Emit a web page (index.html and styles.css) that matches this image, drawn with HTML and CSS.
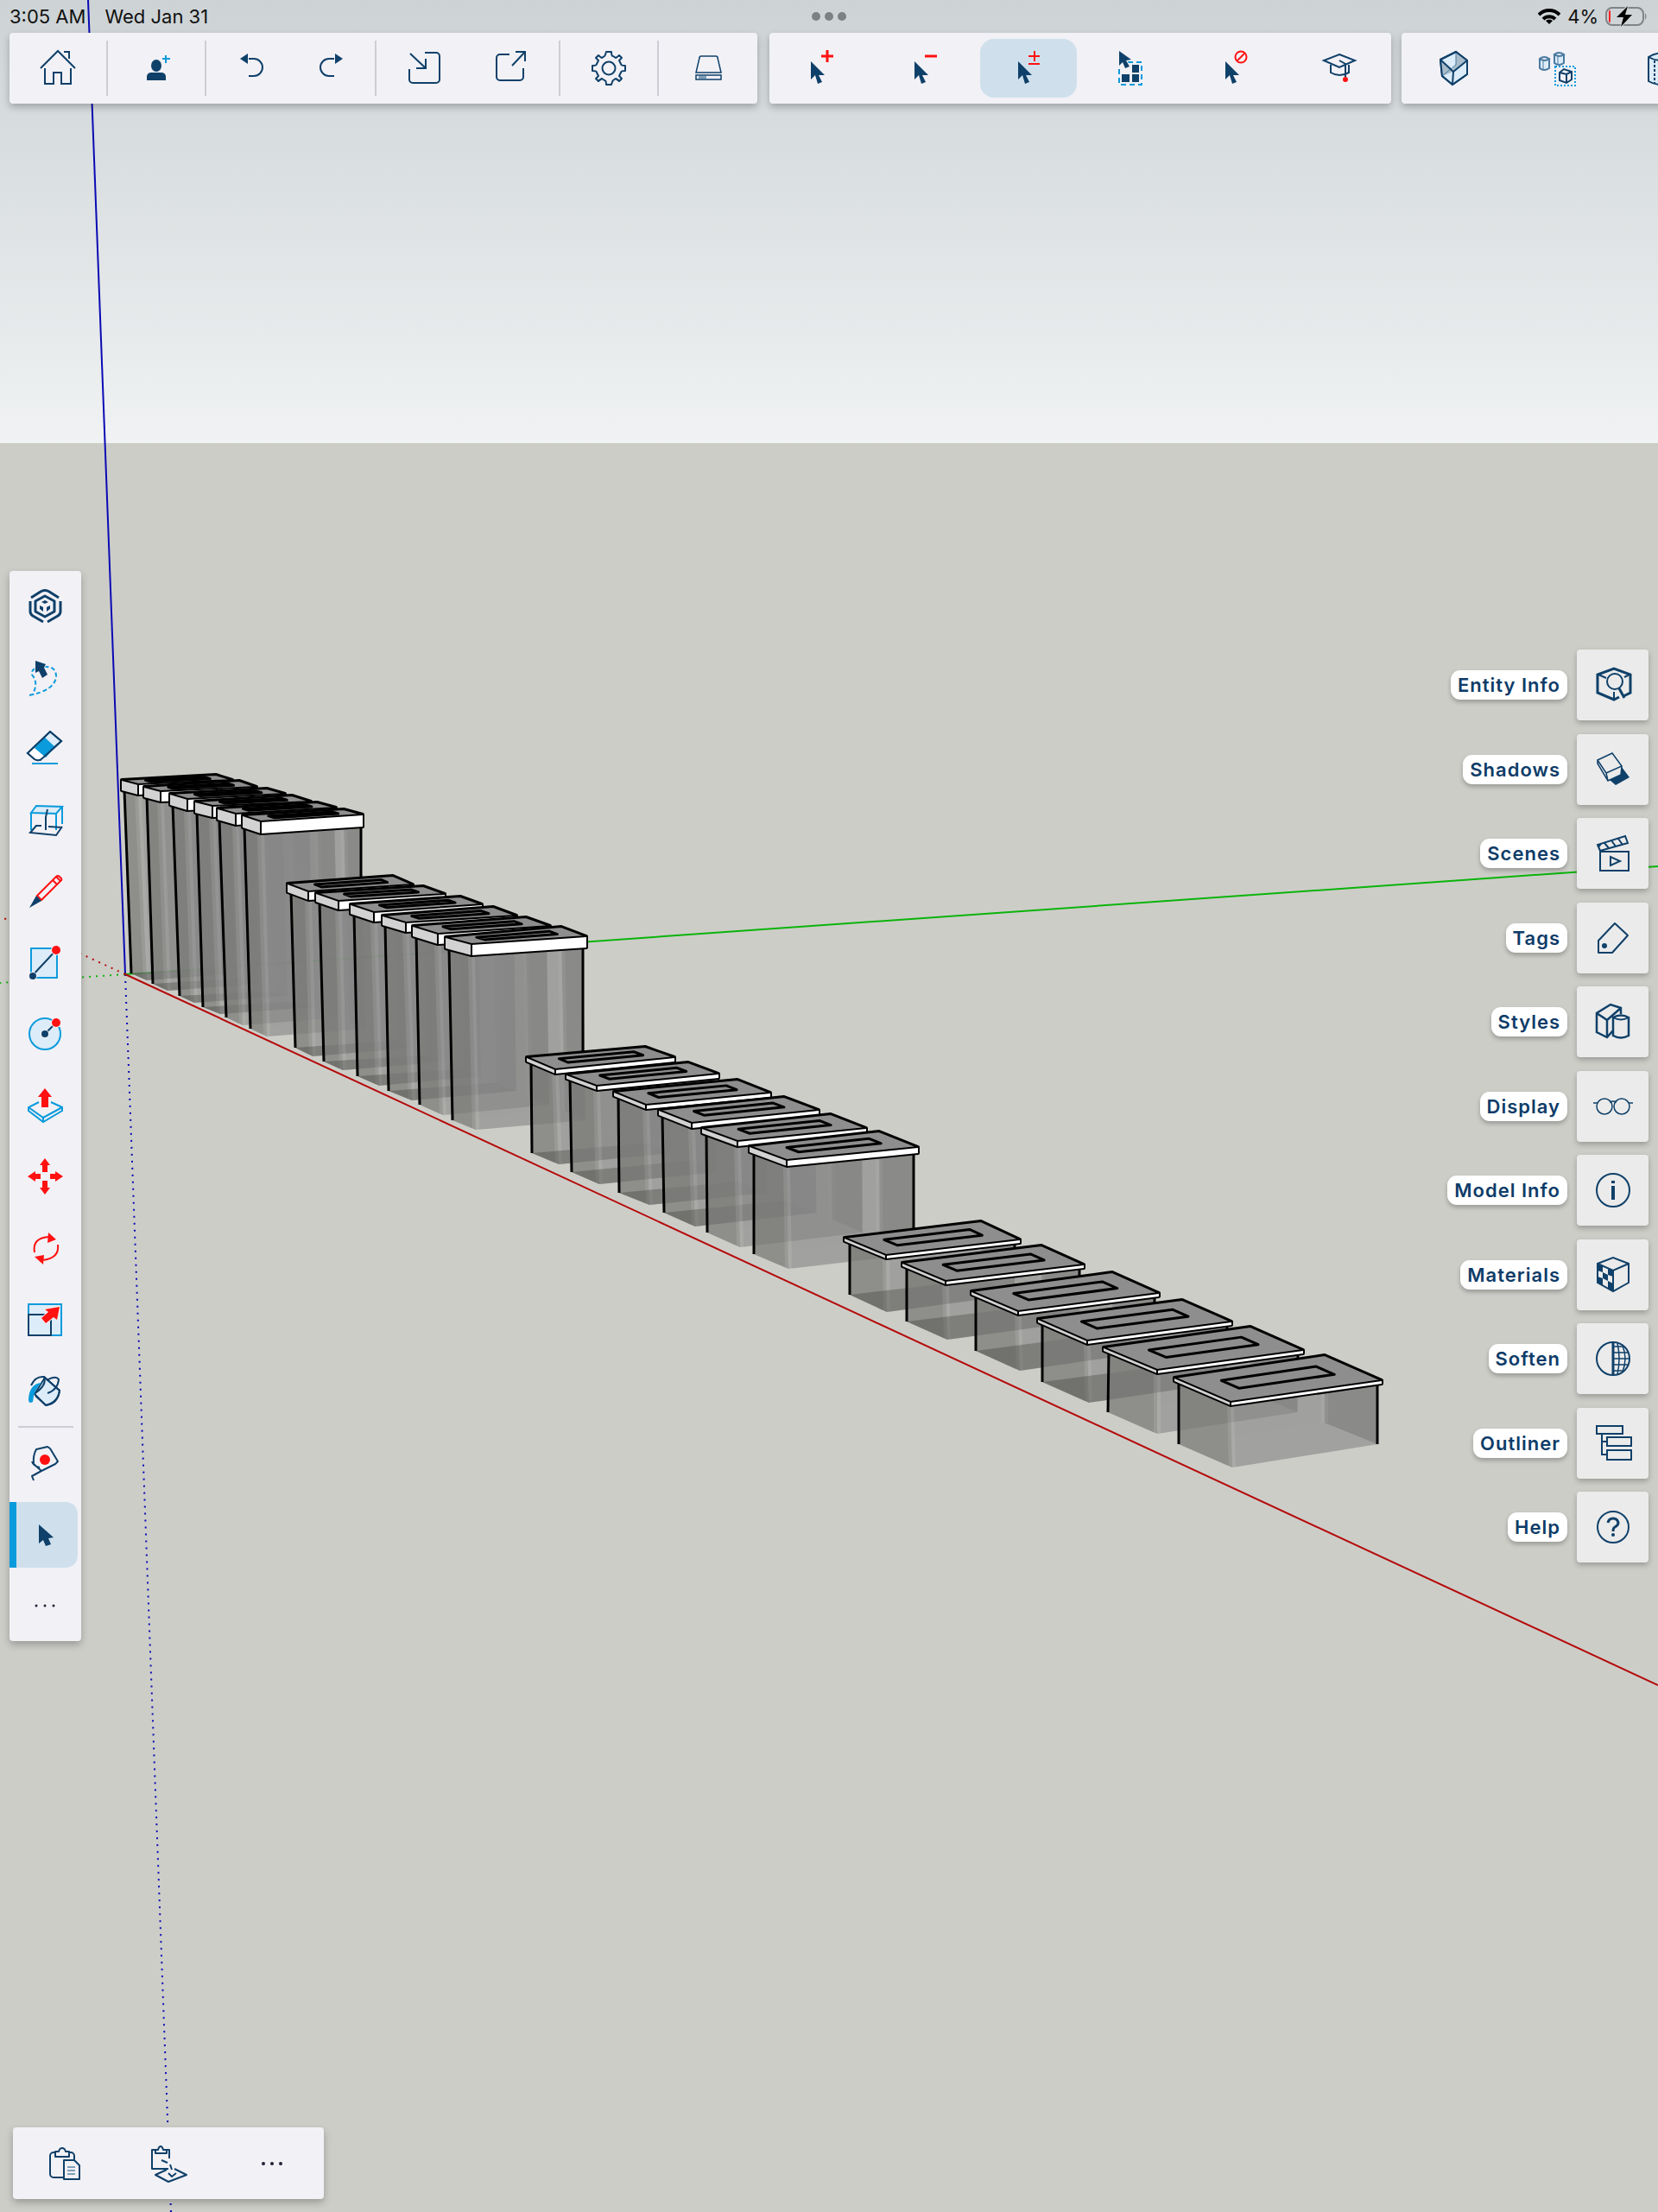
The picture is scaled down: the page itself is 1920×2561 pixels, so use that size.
FILE: index.html
```html
<!DOCTYPE html>
<html lang="en">
<head>
<meta charset="utf-8">
<meta name="viewport" content="width=device-width, initial-scale=1">
<title>Model viewer</title>
<link rel="stylesheet" href="styles.css">
</head>
<body>
<svg class="scene" viewBox="0 0 1920 2561" preserveAspectRatio="xMinYMin slice" aria-hidden="true">
  <defs>
    <linearGradient id="sky" x1="0" y1="0" x2="0" y2="1">
      <stop offset="0" stop-color="#cdd3d5"/>
      <stop offset="1" stop-color="#f0f2f3"/>
    </linearGradient>
  </defs>
  <rect width="1920" height="2561" fill="#cdcdc8"/>
  <rect width="1920" height="513" fill="url(#sky)"/>
  <path class="axis blue" d="M102 0L145 1128"/>
  <path class="axis blue dotted" d="M145 1128L198 2561"/>
  <path class="axis green" d="M145 1128L1920 1003"/>
  <path class="axis green dotted" d="M145 1128L0 1138"/>
  <path class="axis red dotted" d="M145 1128L0 1061"/>
  <g id="boxes"></g>
  <path class="axis red" d="M145 1128L1920 1951"/>
</svg>

<div class="app">
  <header>
    <div class="status">
      <div class="status-left"><span>3:05 AM</span><span>Wed Jan 31</span></div>
      <div class="status-dots"><i></i><i></i><i></i></div>
      <div class="status-right">
        <svg width="26" height="20" viewBox="0 0 26 20"><g fill="none" stroke="#000" stroke-width="4"><path d="M1 8a17 17 0 0 1 24 0"/><path d="M6 13a10 10 0 0 1 14 0"/></g><path d="M13 19l-4-4a6 6 0 0 1 8 0z"/></svg>
        <span>4%</span>
        <svg width="50" height="24" viewBox="0 0 50 24"><rect x="1" y="2" width="43" height="20" rx="7" fill="none" stroke="#808486" stroke-width="2"/><rect x="4" y="5" width="2" height="14" rx="1" fill="#f22"/><path d="M46 8q3 4 0 8z" fill="#808486"/><path d="M26 0L13 13h8l-3 11 13-14h-8z" stroke="#d0d5d7" stroke-width="2" paint-order="stroke"/></svg>
      </div>
    </div>
    <div class="toolbars">
      <div class="bar main-bar" role="toolbar" aria-label="Main">
        <div class="cell"><button aria-label="Home"><svg class="icon" viewBox="0 0 48 48"><path d="M4 24L24 4l20 20M31 5h6v8M9 24v18h10V29h9v13h11V24"/></svg></button></div>
        <div class="cell"><button aria-label="Add user"><svg class="icon" viewBox="0 0 48 48"><g class="solid"><ellipse cx="24" cy="21" rx="6" ry="7"/><path d="M13 38v-5q1-4 5-4h12q4 0 5 4v5z"/></g><path class="sky" d="M31 13h9M35 9v9"/></svg></button></div>
        <div class="cell pair"><button aria-label="Undo"><svg class="icon" viewBox="0 0 48 48"><path d="M20 13h6a10 10 0 0 1 0 20h-6"/><path class="solid" d="M10 13l9-6v12z"/></svg></button><button aria-label="Redo"><svg class="icon" viewBox="0 0 48 48"><path d="M29 13h-6a10 10 0 0 0 0 20h6"/><path class="solid" d="M39 13l-9-6v12z"/></svg></button></div>
        <div class="cell pair wide"><button aria-label="Import"><svg class="icon" viewBox="0 0 48 48"><path d="M24 6h13a4 4 0 0 1 4 4v27a4 4 0 0 1-4 4H10a4 4 0 0 1-4-4V25M7 7l18 17M25 13v11H14"/></svg></button><button aria-label="Export"><svg class="icon" viewBox="0 0 48 48"><path d="M22 8H11a4 4 0 0 0-4 4v22a4 4 0 0 0 4 4h23a4 4 0 0 0 4-4V24M25 21L40 5M29 5h11v11"/></svg></button></div>
        <div class="cell"><button aria-label="Settings"><svg class="icon" viewBox="0 0 48 48"><g transform="translate(24 24)"><path stroke-linejoin="round" d="M19 -3V3Q14 3 14 5L12 9Q13 10 15 12L12 15Q10 13 8 12L5 14Q4 15 3 19H-3Q-3 14 -5 14L-8 12Q-10 13 -12 15L-15 12Q-13 10 -12 9L-14 5Q-14 3 -19 3V-3Q-14 -3 -14 -5L-12 -9Q-13 -10 -15 -12L-12 -15Q-10 -13 -8 -12L-5 -14Q-4 -15 -3 -19H3Q3 -14 5 -14L8 -12Q10 -13 12 -15L15 -12Q13 -10 12 -9L14 -5Q14 -3 19 -3Z"/><circle r="7.500"/></g></svg></button></div>
        <div class="cell"><button aria-label="Tray"><svg class="icon" viewBox="0 0 48 48"><path stroke-width="1.500" d="M16 10h17q2 0 2 2l4 17H10l4-17q0-2 2-2zM10 32h29v5H10z"/><path class="light" d="M14 34h7v1h-7z"/></svg></button></div>
      </div>
      <div class="bar select-bar" role="toolbar" aria-label="Selection">
        <button aria-label="Add to selection"><svg class="icon" viewBox="0 0 48 48"><path class="solid" d="M12 16v21l5-5 3 10 5-2-4-8h7z"/><path class="red" stroke-width="3" d="M24 10h14M31 3v14"/></svg></button>
        <button aria-label="Remove from selection"><svg class="icon" viewBox="0 0 48 48"><path class="solid" d="M12 16v21l5-5 3 10 5-2-4-8h7z"/><path class="red" stroke-width="3" d="M24 10h14"/></svg></button>
        <button class="active" aria-label="Toggle selection"><svg class="icon" viewBox="0 0 48 48"><path class="solid" d="M12 16v21l5-5 3 10 5-2-4-8h7z"/><path class="red" d="M24 10h13M31 4v12M24 19h13"/></svg></button>
        <button aria-label="Select all"><svg class="icon" viewBox="0 0 48 48"><rect class="sky" x="9" y="17" width="26" height="26" stroke-dasharray="6 4"/><path class="solid" d="M24 20h8v9h-8zM12 31h9v9h-9zM24 31h8v9h-8z"/><path class="solid halo" d="M9 4v17l4-4 3 7 5-2-4-7 6-1z"/></svg></button>
        <button aria-label="Deselect all"><svg class="icon" viewBox="0 0 48 48"><path class="solid" d="M12 16v21l5-5 3 10 5-2-4-8h7z"/><circle class="red" cx="30" cy="11" r="6.500"/><path class="red" d="M26 15l8-8"/></svg></button>
        <button aria-label="Learn"><svg class="icon" viewBox="0 0 48 48"><path d="M24 8l18 7-18 8-18-8zM14 20v9q10 6 21 0v-9M24 15l7 4v15"/><circle class="redfill" cx="31" cy="37" r="3"/></svg></button>
      </div>
      <div class="bar select-bar" role="toolbar" aria-label="Views">
        <button aria-label="Face style"><svg class="icon" viewBox="0 0 48 48"><path class="pale" d="M9 14L27 5l13 10v16L23 43 11 33z"/><path class="shade" d="M27 5l13 10-16 13-1-4 4-4zM9 14l15 14-13 5z"/><path class="mid" stroke-width="1" d="M27 5v15L11 33"/><path d="M9 14L27 5l13 10v16L23 43 11 33zM9 14l15 14-1 15M24 28l16-13"/></svg></button>
        <button aria-label="Instances"><svg class="icon thin" viewBox="0 0 48 48"><path class="pale mid" stroke-width="2" d="M4 13v11q5 4 11 0V13M4 13q5-4 11 0q-5 4-11 0zM21 8v10q5 4 11 0V8M21 8q5-4 11 0q-5 4-11 0z"/><path class="mid" d="M8 15v10M25 10v10"/><rect class="sky" stroke-width="2" x="22" y="22" width="23" height="22" stroke-dasharray="2 2"/><path stroke-width="2" d="M27 29l5-4 9 3v9l-6 4-8-3zM27 29l8 2 6-3M35 31v10"/></svg></button>
        <button aria-label="Cylinder"><svg class="icon" viewBox="0 0 48 48"><path class="pale" d="M10 11v28q14 8 28 0V11q-14-9-28 0zq14 8 28 0"/><path stroke-dasharray="3 2" d="M17 15v27"/></svg></button>
      </div>
    </div>
  </header>

  <main>
    <div class="bar tools" role="toolbar" aria-label="Tools" aria-orientation="vertical">
      <button aria-label="SketchUp"><svg class="icon" viewBox="0 0 48 48"><path stroke-width="3" d="M8 14l11-7q5-3 10 0l11 7M7 18v12q0 3 3 5l12 7M42 18v12q0 3-3 5l-12 7"/><path stroke-width="3" stroke-linejoin="round" d="M24 12l11 6v12l-11 6-11-6V18z"/><path class="solid" d="M24 17l4 2-4 2-4-2zM18 23l4 2v5l-4-3zM30 23l-4 2v5l4-3z"/></svg></button>
      <button aria-label="Lasso"><svg class="icon" viewBox="0 0 48 48"><path class="sky" stroke-dasharray="5 3" d="M6 44q30-6 31-22 0-12-14-11Q7 12 9 20q8 10 1 22"/><path class="solid halo" d="M13 4l12 4-2 4 4 8-6 4-4-8-4 2z"/></svg></button>
      <button aria-label="Eraser"><svg class="icon" viewBox="0 0 48 48"><path class="pale" d="M30 4l13 11-22 20q-4 4-9 1l-8-7z"/><path fill="#fff" stroke="none" d="M12 23l13 11-4 3-7 0-10-8z"/><path class="blue-fill" d="M23 10l13 12-11 12-13-11z"/><path d="M30 4l13 11-22 20q-4 4-9 1l-8-7z"/><path class="sky" d="M9 41h30"/></svg></button>
      <button aria-label="Section"><svg class="icon" viewBox="0 0 48 48"><path class="sky pale-in" d="M8 15l6-8 30 1-7 8z"/><path class="sky" d="M8 15v20M37 16v19M44 8v20"/><path d="M14 30l-7 8 30 3 7-10M13 30h7M28 31l16 1M25 35V20l2-9"/></svg></button>
      <button aria-label="Line"><svg class="icon" viewBox="0 0 48 48"><path class="red" d="M15 29L37 7q2-2 4 0l2 2q1 2-1 3L20 34zM33 11l5 5M37 7l5 5"/><path class="solid" d="M6 43l8-14 6 6z"/></svg></button>
      <button aria-label="Rectangle"><svg class="icon" viewBox="0 0 48 48"><rect class="sky pale-in" x="8" y="7" width="30" height="34"/><path d="M9 39L37 9"/><circle class="solid halo" cx="10" cy="39" r="4"/><circle class="redfill halo" cx="37" cy="9" r="5"/></svg></button>
      <button aria-label="Circle"><svg class="icon" viewBox="0 0 48 48"><circle class="sky pale-in" cx="24" cy="24" r="18"/><path d="M24 24l13-13"/><circle class="solid halo" cx="24" cy="24" r="4"/><circle class="redfill halo" cx="37" cy="11" r="5"/></svg></button>
      <button aria-label="Push pull"><svg class="icon" viewBox="0 0 48 48"><path class="sky" d="M17 20L5 26v4l17 13 22-13v-4l-13-6M5 26l17 12 22-12M22 38v5"/><path class="redfill halo" d="M24 4l8 10h-4v12h-8V14h-4z"/></svg></button>
      <button aria-label="Move"><svg class="icon" viewBox="0 0 48 48"><path class="redfill" d="M24 3l6 8h-3v8h-6v-8h-3zM24 45l6-8h-3v-8h-6v8h-3zM4 24l9-6v3h6v6h-6v3zM45 24l-9-6v3h-6v6h6v3z"/></svg></button>
      <button aria-label="Rotate"><svg class="icon" viewBox="0 0 48 48"><path class="red" d="M12 29Q9 12 29 11M39 20q2 16-18 18"/><path class="redfill" d="M28 6l9 8-10 4zM22 43l-10-9 11-2z"/></svg></button>
      <button aria-label="Scale"><svg class="icon" viewBox="0 0 48 48"><rect class="sky pale-in" x="5" y="7" width="38" height="36"/><path d="M5 43V19h26v24z"/><path class="redfill halo" d="M41 10l-3 15-4-3-9 7-5-6 8-7-4-3z"/></svg></button>
      <button aria-label="Paint"><svg class="icon" viewBox="0 0 48 48"><path class="pale" d="M24 9l17 15q-2 14-16 17L12 28z"/><path d="M8 18Q13 7 23 8l18 16q-2 15-16 17L13 30M23 8q4 10-12 20M26 12q11-6 14-1-1 12-13 16"/><path class="blue-fill" d="M20 15Q6 16 5 34q0 6 5 3 1-14 10-22z"/></svg></button>
      <hr>
      <button aria-label="Tape measure"><svg class="icon" viewBox="0 0 48 48"><path stroke-linejoin="round" d="M14 8l13-3 3 2 9 15-3 3-16 8-9-8q-1-10 3-17zM9 22q2 6 9 7M20 33L9 39l2 5"/><circle class="redfill" cx="24" cy="20" r="6"/></svg></button>
      <button class="active" aria-label="Select"><svg class="icon" viewBox="0 0 48 48"><path class="solid" d="M16 12v22l5-4 3 7 6-2-3-7 6-1z"/></svg></button>
      <button aria-label="More tools"><svg class="icon" viewBox="0 0 48 48"><g fill="#223" stroke="none"><circle cx="14" cy="24" r="1.500"/><circle cx="24" cy="24" r="1.500"/><circle cx="34" cy="24" r="1.500"/></g></svg></button>
    </div>

    <ul class="panels">
      <li><label for="p1">Entity Info</label><button id="p1"><svg class="icon" viewBox="0 0 48 48"><path stroke-width="3" d="M36 37l8-4V12L25 5 6 12v21l19 8 6-3"/><path d="M7 12l9 4M43 12l-6 3M25 32v9"/><circle cx="26" cy="20" r="9"/><path stroke-width="3" d="M31 28l6 11"/></svg></button></li>
      <li><label for="p2">Shadows</label><button id="p2"><svg class="icon" viewBox="0 0 48 48"><path class="solid" d="M34 21l9 12-16 9-7-6 13-6z"/><path stroke-width="1.500" d="M6 13l17-8 11 15-18 8zM6 13v4l12 20 15-7 1-10M16 28l2 9"/></svg></button></li>
      <li><label for="p3">Scenes</label><button id="p3"><svg class="icon" viewBox="0 0 48 48"><path d="M9 22h33v22H9zM9 21l-3-7L38 4l3 8zM21 28v10l11-5zM14 12l5 6M22 9l5 7M30 7l5 7M10 13l-3 4"/></svg></button></li>
      <li><label for="p4">Tags</label><button id="p4"><svg class="icon" viewBox="0 0 48 48"><path stroke-linejoin="round" d="M7 27L26 7l15 14-18 20H7z"/><circle class="solid" cx="14" cy="33" r="3"/></svg></button></li>
      <li><label for="p5">Styles</label><button id="p5"><svg class="icon" viewBox="0 0 48 48"><path stroke-width="2.500" d="M24 34l-7 8-12-6V14L21 4l12 4v7M5 14l12 8v20M17 22L33 8M24 19v21q9 5 18 0V19q-9-5-18 0z"/><path d="M24 19q9 5 18 0"/></svg></button></li>
      <li><label for="p6">Display</label><button id="p6"><svg class="icon" viewBox="0 0 48 48"><g stroke-width="1.500"><circle cx="14" cy="24" r="9"/><circle cx="34" cy="24" r="9"/><path d="M20 19q4-2 8 0M1 20h5M42 20h5"/></g></svg></button></li>
      <li><label for="p7">Model Info</label><button id="p7"><svg class="icon" viewBox="0 0 48 48"><circle cx="24" cy="24" r="19"/><path class="solid" d="M22 13h4v3h-4zM22 19h4v16h-4z"/></svg></button></li>
      <li><label for="p8">Materials</label><button id="p8"><svg class="icon" viewBox="0 0 48 48"><path d="M6 11l18-7 18 7v22L24 43 6 33zM6 11l18 8 18-8M24 19v24"/><path class="solid" d="M6 11l6 3v7l-6-2zM18 17l6 2v7l-6-2zM12 21l6 3v7l-6-3zM6 26l6 2v8l-6-3zM18 31l6 3v9l-6-4z"/></svg></button></li>
      <li><label for="p9">Soften</label><button id="p9"><svg class="icon" viewBox="0 0 48 48"><circle cx="24" cy="24" r="19"/><path stroke-width="3" d="M24 5v38"/><path stroke-width="1.500" d="M24 10h12M24 17h17M24 24h19M24 31h17M24 38h12M29 6q4 18 0 36M35 9q6 15 0 30"/></svg></button></li>
      <li><label for="p10">Outliner</label><button id="p10"><svg class="icon" viewBox="0 0 48 48"><path d="M5 4h30v9H5zM17 17h28v10H17zM17 32h28v11H17zM11 13v24h6M11 22h6"/></svg></button></li>
      <li><label for="p11">Help</label><button id="p11"><svg class="icon" viewBox="0 0 48 48"><circle cx="24" cy="24" r="18"/><path stroke-width="3" d="M18 19q1-5 6-5t6 5q0 3-4 5-2 1-2 5"/><circle class="solid" cx="24" cy="33" r="2"/></svg></button></li>
    </ul>
  </main>

  <footer>
    <div class="bar clip-bar" role="toolbar" aria-label="Clipboard">
      <button aria-label="Paste"><svg class="icon" viewBox="0 0 48 48"><path stroke-linejoin="round" d="M22 40H11a4 4 0 0 1-4-4V15a4 4 0 0 1 4-4h2M29 11h2a4 4 0 0 1 4 4v5M13 10h4q1-4 4-4t4 4h4v6H13zM23 20h12l6 6v16H23z"/><path class="light" d="M27 28h9M27 32h9M27 36h9"/></svg></button>
      <button aria-label="Paste in place"><svg class="icon" viewBox="0 0 48 48"><path stroke-linejoin="round" d="M24 30H5V8h4M21 8h4v10M9 8h3q1-4 3-4t3 4h4v4H9zM22 31L9 37l15 8 21-8-14-7M16 20l7 3M26 25l2 6M24 35l4 4 5-4"/></svg></button>
      <button aria-label="More"><svg class="icon" viewBox="0 0 48 48"><g fill="#223" stroke="none"><circle cx="14" cy="24" r="2"/><circle cx="24" cy="24" r="2"/><circle cx="34" cy="24" r="2"/></g></svg></button>
    </div>
  </footer>
</div>
<script src="scene.js"></script>
</body>
</html>
```
FILE: styles.css
```css
* { box-sizing: border-box; }
body {
  margin: 0;
  background: #cdcdc8;
  font-family: Inter, "Liberation Sans", sans-serif;
  font-size: 22px;
  color: #111;
}
.scene { position: absolute; inset: 0; width: 100%; height: 100%; display: block; }
.app {
  position: relative;
  min-height: 100vh;
  display: flex;
  flex-direction: column;
  overflow: hidden;
}
button {
  border: 0;
  padding: 0;
  background: none;
  display: flex;
  align-items: center;
  justify-content: center;
}

/* model */
.axis { fill: none; stroke-width: 2; }
.axis.blue { stroke: #0a0ab4; }
.axis.green { stroke: #0ab40a; }
.axis.red { stroke: #b40a0a; }
.axis.dotted { stroke-dasharray: 2 6; }
.floor { fill: rgba(100, 100, 100, .35); }
.floor-shade { fill: rgba(60, 60, 58, .35); }
.wall-right { fill: rgba(80, 80, 78, .6); }
.wall-back { fill: rgba(110, 110, 110, .4); }
.wall-left { fill: rgba(125, 125, 122, .6); }
.wall-front { fill: rgba(150, 150, 150, .4); }
.glint { stroke: rgba(255, 255, 255, .1); stroke-width: 8; }
.edge { stroke: #000; stroke-width: 3; }
.lid-outline { fill: #000; stroke: #000; stroke-width: 4; stroke-linejoin: round; }
.lid-top { fill: #8e8e8e; stroke: #000; stroke-width: 2; stroke-linejoin: round; }
.lid-left { fill: #d2d2d2; }
.lid-front { fill: #fff; }
.lid-corner { stroke: #000; stroke-width: 2; }
.handle { fill: none; stroke: #000; stroke-width: 3; stroke-linejoin: round; }

/* status line */
.status {
  height: 38px;
  padding: 0 11px;
  display: grid;
  grid-template-columns: 1fr auto 1fr;
  align-items: center;
}
.status-left { display: flex; gap: 22px; }
.status-dots { display: flex; gap: 5px; }
.status-dots i { width: 10px; height: 10px; border-radius: 50%; background: #7c8183; }
.status-right { display: flex; gap: 8px; align-items: center; justify-content: flex-end; }

/* bars */
.bar {
  background: #f2f1f6;
  border-radius: 4px;
  box-shadow: 0 4px 8px rgba(0, 0, 0, .25);
}
.toolbars { display: flex; padding-left: 11px; gap: 12px; }
.main-bar { display: flex; align-items: center; height: 82px; flex: none; margin-right: 2px; }
.cell {
  width: 114px;
  height: 64px;
  display: flex;
  justify-content: center;
  border-right: 2px solid #cdcdd3;
}
.cell:last-child { border-right: 0; }
.cell button { width: 90px; }
.cell.pair { width: 197px; }
.cell.wide { width: 213px; }
.cell.wide button { width: 100px; }
.select-bar { display: flex; align-items: center; height: 82px; flex: none; padding: 0 4px; gap: 8px; }
.select-bar button { width: 112px; height: 68px; border-radius: 16px; }
.select-bar .active { background: #cfe0ec; }

main {
  flex: 1;
  display: flex;
  align-items: center;
  justify-content: space-between;
  padding: 0 11px 22px;
}
.tools {
  width: 83px;
  min-height: 1239px;
  display: flex;
  flex-direction: column;
}
.tools button { flex: 1 0 82px; width: 100%; padding-right: 2px; }
.tools .active {
  flex: 0 0 76px;
  width: 79px;
  margin: 3px 0;
  padding-right: 4px;
  border-left: 8px solid #0a9bdc;
  border-radius: 0 14px 14px 0;
  background: #cfe0ec;
}
.tools hr { width: 64px; height: 2px; margin: 0 auto; border: 0; background: #cdcdd3; }

.panels {
  list-style: none;
  margin: 0;
  padding: 0;
  min-height: 1057px;
  display: flex;
  flex-direction: column;
  justify-content: space-between;
}
.panels li { display: flex; align-items: center; justify-content: flex-end; gap: 11px; }
.panels label {
  padding: 0 8px;
  line-height: 34px;
  border-radius: 11px;
  background: #fff;
  box-shadow: 0 3px 5px rgba(0, 0, 0, .25);
  color: #0e3c68;
  font-weight: 600;
  letter-spacing: 1px;
}
.panels button {
  width: 83px;
  height: 82px;
  background: #ebebeb;
  border-radius: 4px;
  box-shadow: 0 3px 6px rgba(0, 0, 0, .25);
}

footer { display: flex; padding: 0 15px 15px; }
.clip-bar { display: flex; height: 83px; }
.clip-bar button { width: 120px; }

/* icons */
.icon { width: 48px; height: 48px; flex: none; fill: none; stroke: #0f4069; stroke-width: 2; }
.icon.thin { stroke-width: 1; }
.icon .solid { fill: #0f4069; stroke: none; }
.icon .halo { stroke: #f2f1f6; stroke-width: 2; paint-order: stroke; }
.icon .sky { stroke: #0a9bdc; }
.icon .red { stroke: #f11; }
.icon .redfill { fill: #f11; }
.icon .redfill:not(.halo) { stroke: none; }
.icon .pale, .icon .pale-in { fill: #dcecf8; }
.icon .mid { stroke: #4a7aa0; }
.icon .shade { fill: #a8bccb; stroke: none; }
.icon .light { stroke: #7f9fb8; }
.icon .blue-fill { fill: #0a9bdc; stroke: none; }
```
FILE: scene.js
```js
// Storage boxes, far to near. Each row: lid corners (left, front, right, back),
// lid thickness, left edge top and foot, and the foot of the front corner.
const boxes = [
  [141,903, 160,908, 269,903, 250,897, 12, 144,152,1127, 170,1135],
  [167,911, 186,916, 297,911, 277,904, 12, 170,177,1139, 194,1147],
  [197,919, 217,925, 330,919, 309,913, 13, 200,208,1153, 225,1161],
  [226,928, 246,933, 360,928, 338,921, 13, 228,235,1166, 255,1174],
  [252,936, 273,942, 389,935, 367,929, 13, 254,262,1178, 281,1187],
  [281,944, 302,951, 420,943, 398,937, 14, 283,290,1191, 309,1200, 1017],
  [333,1023, 357,1032, 478,1024, 455,1014, 10, 337,342,1213, 362,1223],
  [366,1034, 392,1043, 515,1035, 490,1026, 10, 370,375,1229, 397,1239],
  [406,1047, 433,1056, 558,1047, 533,1038, 11, 410,414,1246, 439,1257],
  [443,1060, 470,1068, 598,1060, 571,1050, 11, 446,450,1263, 477,1274],
  [478,1072, 507,1081, 637,1072, 609,1062, 12, 482,486,1279, 513,1291],
  [516,1085, 546,1093, 679,1084, 650,1073, 13, 520,524,1297, 551,1308, 1217],
  [610,1224, 643,1238, 781,1224, 747,1212, 5, 615,616,1335, 647,1348],
  [656,1244, 691,1257, 832,1243, 797,1230, 5, 660,662,1357, 694,1371],
  [711,1264, 748,1279, 892,1265, 854,1250, 5, 716,717,1381, 752,1395],
  [763,1285, 801,1300, 948,1285, 908,1270, 6, 767,769,1404, 805,1420],
  [813,1306, 854,1321, 1003,1306, 962,1290, 6, 818,819,1427, 857,1444],
  [868,1327, 911,1343, 1063,1328, 1018,1310, 7, 873,873,1452, 913,1469, 1423],
  [978,1433, 1026,1453, 1181,1435, 1136,1414, 4, 984,984,1499, 1027,1519, 1450],
  [1045,1462, 1095,1483, 1255,1464, 1206,1442, 4, 1050,1050,1530, 1097,1551, 1479],
  [1125,1495, 1179,1518, 1342,1497, 1288,1473, 4, 1130,1130,1564, 1181,1587, 1510],
  [1202,1527, 1259,1552, 1426,1530, 1369,1505, 4, 1207,1207,1600, 1261,1624, 1542],
  [1278,1560, 1340,1586, 1509,1563, 1448,1536, 4, 1284,1283,1635, 1340,1660, 1576],
  [1360,1595, 1425,1623, 1600,1598, 1534,1569, 4, 1365,1365,1672, 1427,1699, 1672]
];

const poly = (cls, ...pts) => `<polygon class="${cls}" points="${pts.map(p => p.join()).join(' ')}"/>`;
const line = (cls, a, b) => `<line class="${cls}" x1="${a[0]}" y1="${a[1]}" x2="${b[0]}" y2="${b[1]}"/>`;

function drawBox([lx, ly, fx, fy, rx, ry, bx, by, t, topX, footX, footY, ffx, ffy, rightEnd], index) {
  const inset = topX - lx;
  const L = [lx, ly], F = [fx, fy], R = [rx, ry], B = [bx, by];
  const down = p => [p[0], p[1] + t];
  const topL = [topX, ly + t], topF = [fx, fy + t], topR = [rx - inset, ry + t], topB = [bx, by + t];
  const footL = [footX, footY], footF = [ffx, ffy];
  const footR = [rx - inset + (footX - topX) * 0.7, footY];
  const footB = [footX + (bx - lx) * 0.97, footY + (by - ly) * 0.95];
  // point on the lid at u (left to back) and v (left to front)
  const at = (u, v) => [0, 1].map(i =>
    L[i] * (1 - u) * (1 - v) + B[i] * u * (1 - v) + F[i] * (1 - u) * v + R[i] * u * v);

  let out = poly('floor', footL, footF, footR, footB)
    + poly('wall-back', topL, topB, footB, footL)
    + poly('wall-right', topB, topR, footR, footB)
    + line('glint', topB, footB)
    + poly('wall-left', topL, topF, footF, footL)
    + poly('wall-front', topF, topR, footR, footF)
    + line('glint', topF, footF);
  // the first four boxes of a row stand in the shade of their neighbours
  if (index % 6 < 4) out += poly('floor-shade', footL, footF, footR, footB);
  out += line('edge', topL, footL);
  if (rightEnd) out += line('edge', topR, [topR[0], rightEnd]);
  return out
    + poly('lid-outline', L, down(L), down(F), down(R), R, B)
    + poly('lid-top', L, F, R, B)
    + poly('lid-left', [lx, ly + 1], [fx, fy + 1], down(F), down(L))
    + poly('lid-front', [fx, fy + 1], [rx, ry + 1], down(R), down(F))
    + line('lid-corner', F, down(F))
    + poly('handle', at(0.2, 0.3), at(0.2, 0.62), at(0.83, 0.62), at(0.83, 0.3));
}

document.getElementById('boxes').innerHTML = boxes.map(drawBox).join('');
```
